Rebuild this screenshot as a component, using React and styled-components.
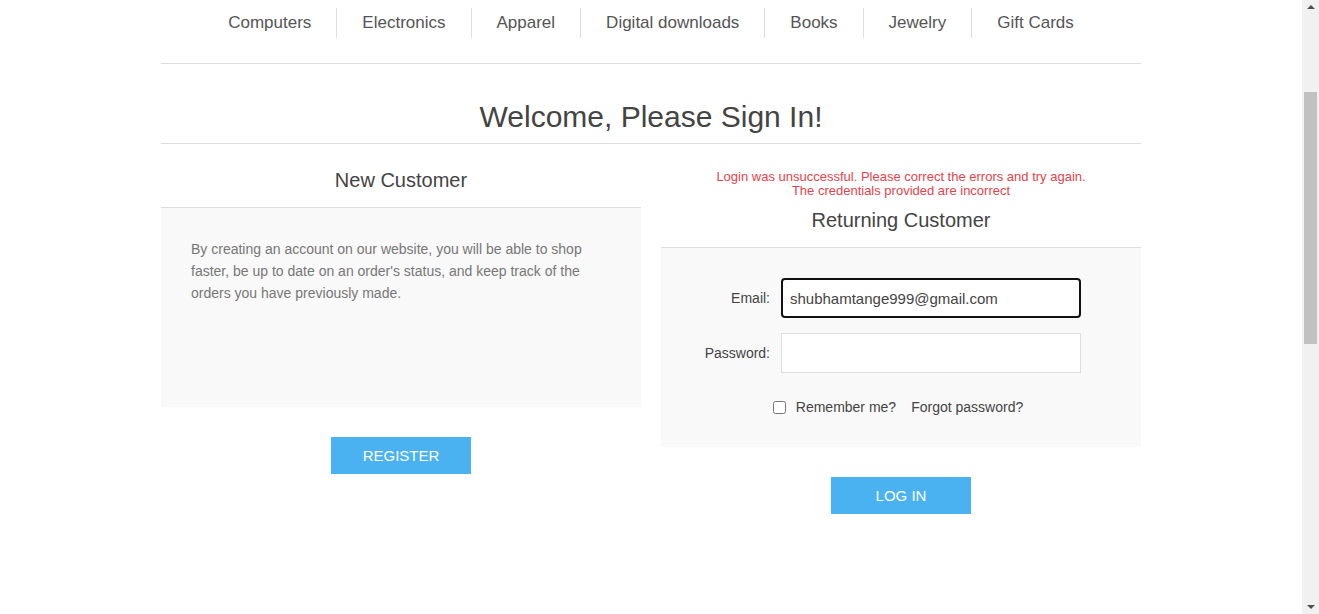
import styled, { createGlobalStyle } from "styled-components";

const GlobalStyle = createGlobalStyle`
  html, body { margin: 0; padding: 0; }
  body {
    font-family: "Liberation Sans", Arial, sans-serif;
    background: #fff;
    overflow: hidden;
  }
`;

const Shell = styled.div`
  display: flex;
  height: 100vh;
`;

const Viewport = styled.div`
  flex: 1;
  overflow: hidden;
`;

const Master = styled.div`
  width: 980px;
  margin: 0 auto;
`;

const Menu = styled.ul`
  display: flex;
  justify-content: center;
  list-style: none;
  margin: 0;
  padding: 8px 0 25px;
  border-bottom: 1px solid #ddd;
`;

const MenuItem = styled.li`
  padding: 0 25px;
  line-height: 30px;
  font-size: 17px;
  color: #555;
  border-left: ${(p) => (p.$first ? "none" : "1px solid #ddd")};
`;

const PageTitle = styled.h1`
  margin: 0;
  padding: 35px 0 8px;
  font-size: 30px;
  line-height: 36px;
  font-weight: normal;
  color: #444;
  text-align: center;
  border-bottom: 1px solid #ddd;
`;

const Columns = styled.div`
  display: grid;
  grid-template-columns: 480px 480px;
  column-gap: 20px;
`;

const Column = styled.div`
  display: flex;
  flex-direction: column;
`;

const ErrorMessage = styled.div`
  margin-top: 26px;
  font-size: 13px;
  line-height: 14px;
  color: #e4434b;
  text-align: center;
`;

const BlockTitle = styled.div`
  padding: ${(p) => p.$top}px 10px 15px;
  font-size: 20px;
  line-height: 24px;
  color: #444;
  text-align: center;
  border-bottom: 1px solid #ddd;
`;

const Panel = styled.div`
  box-sizing: border-box;
  height: 199px;
  padding: 30px;
  background: #f9f9f9;
`;

const Text = styled.p`
  margin: 0;
  font-size: 14px;
  line-height: 22px;
  color: #777;
`;

const Field = styled.div`
  display: flex;
  align-items: center;
  margin-bottom: 15px;
`;

const Label = styled.label`
  width: 109px;
  margin-left: -30px;
  margin-right: 11px;
  text-align: right;
  font-size: 14px;
  color: #444;
`;

const Input = styled.input`
  box-sizing: border-box;
  width: 300px;
  height: 40px;
  padding: 0 ${(p) => (p.$focused ? "7px" : "8px")};
  font-family: inherit;
  font-size: 15px;
  color: #444;
  background: #fff;
  border: ${(p) => (p.$focused ? "2px solid #111" : "1px solid #ddd")};
  border-radius: ${(p) => (p.$focused ? "4px" : "0")};
  outline: none;
`;

const Options = styled.div`
  display: flex;
  align-items: center;
  justify-content: center;
  gap: 15px;
  margin-top: 26px;
  margin-right: 6px;
  font-size: 14px;
  color: #444;
`;

const Remember = styled.label`
  display: flex;
  align-items: center;
  gap: 10px;
`;

const Check = styled.input`
  width: 13px;
  height: 13px;
  margin: 0;
`;

const Buttons = styled.div`
  display: flex;
  justify-content: center;
  padding-top: 30px;
`;

const Button = styled.button`
  width: 140px;
  height: 37px;
  border: none;
  background: #4ab2f1;
  color: #fff;
  font-family: inherit;
  font-size: 15px;
  text-transform: uppercase;
`;

const Scrollbar = styled.div`
  width: 17px;
  height: 100vh;
  background: #f1f1f1;
  display: flex;
  flex-direction: column;
  align-items: center;
`;

const Arrow = styled.div`
  width: 0;
  height: 0;
  margin: 5px 0;
  border-left: 4px solid transparent;
  border-right: 4px solid transparent;
  ${(p) => (p.$down ? "border-top: 4px solid #505050;" : "border-bottom: 4px solid #505050;")}
`;

const Track = styled.div`
  flex: 1;
  width: 13px;
  padding-top: ${(p) => p.$offset}px;
`;

const Thumb = styled.div`
  height: 252px;
  background: #c1c1c1;
`;

const categories = [
  "Computers",
  "Electronics",
  "Apparel",
  "Digital downloads",
  "Books",
  "Jewelry",
  "Gift Cards",
];

export default function App() {
  return (
    <Shell>
      <GlobalStyle />
      <Viewport>
        <Master>
          <Menu>
            {categories.map((c, i) => (
              <MenuItem key={c} $first={i === 0}>
                {c}
              </MenuItem>
            ))}
          </Menu>
          <PageTitle>Welcome, Please Sign In!</PageTitle>
          <Columns>
            <Column>
              <BlockTitle $top={24}>New Customer</BlockTitle>
              <Panel>
                <Text>
                  By creating an account on our website, you will be able to shop faster, be up to
                  date on an order's status, and keep track of the orders you have previously made.
                </Text>
              </Panel>
              <Buttons>
                <Button>Register</Button>
              </Buttons>
            </Column>
            <Column>
              <ErrorMessage>
                Login was unsuccessful. Please correct the errors and try again.
                <br />
                The credentials provided are incorrect
              </ErrorMessage>
              <BlockTitle $top={10}>Returning Customer</BlockTitle>
              <Panel>
                <Field>
                  <Label>Email:</Label>
                  <Input $focused defaultValue="shubhamtange999@gmail.com" />
                </Field>
                <Field>
                  <Label>Password:</Label>
                  <Input type="password" />
                </Field>
                <Options>
                  <Remember>
                    <Check type="checkbox" />
                    Remember me?
                  </Remember>
                  <span>Forgot password?</span>
                </Options>
              </Panel>
              <Buttons>
                <Button>Log in</Button>
              </Buttons>
            </Column>
          </Columns>
        </Master>
      </Viewport>
      <Scrollbar>
        <Arrow />
        <Track $offset={78}>
          <Thumb />
        </Track>
        <Arrow $down />
      </Scrollbar>
    </Shell>
  );
}
